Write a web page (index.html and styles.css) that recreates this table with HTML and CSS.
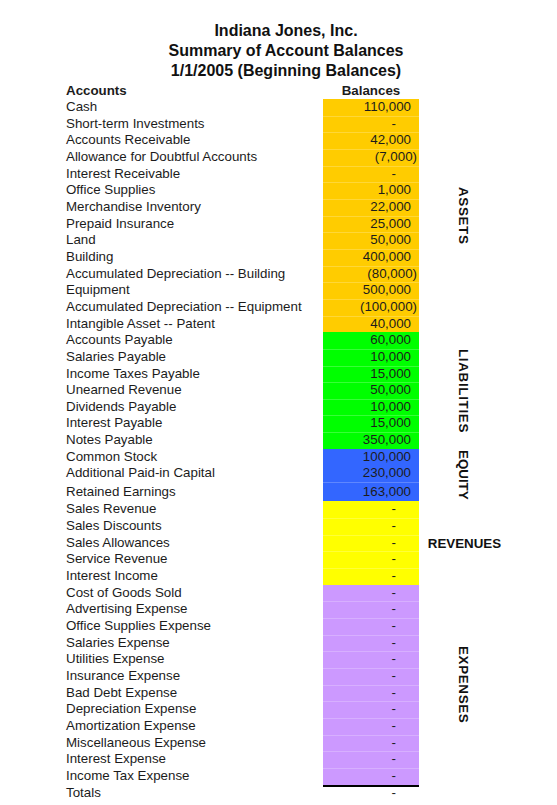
FILE: index.html
```html
<!DOCTYPE html>
<html lang="en">

<head>
    <meta charset="UTF-8">
    <meta name="viewport" content="width=device-width, initial-scale=1.0">
    <title>Summary of Account Balances</title>
    <link rel="stylesheet" href="styles.css">
</head>

<body>
    <div class="sheet">
        <div class="title">
            <div>Indiana Jones, Inc.</div>
            <div>Summary of Account Balances</div>
            <div>1/1/2005 (Beginning Balances)</div>
        </div>

        <div class="row head">
            <span class="name">Accounts</span>
            <span class="amt">Balances</span>
        </div>

        <section class="group assets">
            <div class="rows">
                <div class="row"><span class="name">Cash</span><span class="amt">110,000</span></div>
                <div class="row"><span class="name">Short-term Investments</span><span class="amt nil">-</span></div>
                <div class="row"><span class="name">Accounts Receivable</span><span class="amt">42,000</span></div>
                <div class="row"><span class="name">Allowance for Doubtful Accounts</span><span class="amt neg">(7,000)</span></div>
                <div class="row"><span class="name">Interest Receivable</span><span class="amt nil">-</span></div>
                <div class="row"><span class="name">Office Supplies</span><span class="amt">1,000</span></div>
                <div class="row"><span class="name">Merchandise Inventory</span><span class="amt">22,000</span></div>
                <div class="row"><span class="name">Prepaid Insurance</span><span class="amt">25,000</span></div>
                <div class="row"><span class="name">Land</span><span class="amt">50,000</span></div>
                <div class="row"><span class="name">Building</span><span class="amt">400,000</span></div>
                <div class="row"><span class="name">Accumulated Depreciation -- Building</span><span class="amt neg">(80,000)</span></div>
                <div class="row"><span class="name">Equipment</span><span class="amt">500,000</span></div>
                <div class="row"><span class="name">Accumulated Depreciation -- Equipment</span><span class="amt neg">(100,000)</span></div>
                <div class="row"><span class="name">Intangible Asset -- Patent</span><span class="amt">40,000</span></div>
            </div>
            <div class="side"><span class="vert">ASSETS</span></div>
        </section>

        <section class="group liabilities">
            <div class="rows">
                <div class="row"><span class="name">Accounts Payable</span><span class="amt">60,000</span></div>
                <div class="row"><span class="name">Salaries Payable</span><span class="amt">10,000</span></div>
                <div class="row"><span class="name">Income Taxes Payable</span><span class="amt">15,000</span></div>
                <div class="row"><span class="name">Unearned Revenue</span><span class="amt">50,000</span></div>
                <div class="row"><span class="name">Dividends Payable</span><span class="amt">10,000</span></div>
                <div class="row"><span class="name">Interest Payable</span><span class="amt">15,000</span></div>
                <div class="row"><span class="name">Notes Payable</span><span class="amt">350,000</span></div>
            </div>
            <div class="side"><span class="vert">LIABILITIES</span></div>
        </section>

        <section class="group equity">
            <div class="rows">
                <div class="row"><span class="name">Common Stock</span><span class="amt">100,000</span></div>
                <div class="row"><span class="name">Additional Paid-in Capital</span><span class="amt no-line">230,000</span></div>
                <div class="row tall"><span class="name">Retained Earnings</span><span class="amt">163,000</span></div>
            </div>
            <div class="side"><span class="vert tight">EQUITY</span></div>
        </section>

        <section class="group revenues">
            <div class="rows">
                <div class="row"><span class="name">Sales Revenue</span><span class="amt nil">-</span></div>
                <div class="row"><span class="name">Sales Discounts</span><span class="amt nil">-</span></div>
                <div class="row"><span class="name">Sales Allowances</span><span class="amt nil">-</span></div>
                <div class="row"><span class="name">Service Revenue</span><span class="amt nil">-</span></div>
                <div class="row"><span class="name">Interest Income</span><span class="amt nil">-</span></div>
            </div>
            <div class="side"><span class="flat">REVENUES</span></div>
        </section>

        <section class="group expenses">
            <div class="rows">
                <div class="row"><span class="name">Cost of Goods Sold</span><span class="amt nil">-</span></div>
                <div class="row"><span class="name">Advertising Expense</span><span class="amt nil">-</span></div>
                <div class="row"><span class="name">Office Supplies Expense</span><span class="amt nil">-</span></div>
                <div class="row"><span class="name">Salaries Expense</span><span class="amt nil">-</span></div>
                <div class="row"><span class="name">Utilities Expense</span><span class="amt nil">-</span></div>
                <div class="row"><span class="name">Insurance Expense</span><span class="amt nil">-</span></div>
                <div class="row"><span class="name">Bad Debt Expense</span><span class="amt nil">-</span></div>
                <div class="row"><span class="name">Depreciation Expense</span><span class="amt nil">-</span></div>
                <div class="row"><span class="name">Amortization Expense</span><span class="amt nil">-</span></div>
                <div class="row"><span class="name">Miscellaneous Expense</span><span class="amt nil">-</span></div>
                <div class="row"><span class="name">Interest Expense</span><span class="amt nil">-</span></div>
                <div class="row"><span class="name">Income Tax Expense</span><span class="amt nil">-</span></div>
            </div>
            <div class="side"><span class="vert">EXPENSES</span></div>
        </section>

        <div class="row total">
            <span class="name">Totals</span>
            <span class="amt nil">-</span>
        </div>
    </div>
</body>

</html>
```

FILE: styles.css
```css
* {
    box-sizing: border-box;
    margin: 0;
    padding: 0;
}

body {
    font-family: "Liberation Sans", Arial, sans-serif;
    font-size: 13.33px;
    color: #1c1c1c;
    background-color: white;
}

.sheet {
    width: 506px;
    padding: 21px 0 0 66px;
}

.title {
    font-size: 16px;
    font-weight: bold;
    line-height: 20px;
    text-align: center;
    color: #111;
    margin-bottom: 1px;
}

.row {
    display: flex;
    height: 16.667px;
    line-height: 16.667px;
}

.row.tall {
    height: 19.4px;
    line-height: 19.4px;
}

.name {
    width: 257px;
    white-space: nowrap;
}

.amt {
    width: 96px;
    text-align: right;
    padding-right: 8px;
    white-space: nowrap;
}

.amt.neg {
    padding-right: 2px;
}

.amt.nil {
    padding-right: 23px;
}

/* header row above the list */
.row.head {
    height: 17px;
    line-height: 17px;
    font-weight: bold;
}

.row.head .amt {
    text-align: center;
    padding-right: 0;
}

/* each account type is a coloured block with its tag on the right */
.group {
    display: flex;
}

.group .row + .row .amt {
    box-shadow: inset 0 1px 0 rgba(255, 255, 255, 0.22);
}

.group .row + .row .amt.no-line {
    box-shadow: none;
}

.assets .amt {
    background-color: #ffcc00;
}

.liabilities .amt {
    background-color: #00ff00;
}

.equity .amt {
    background-color: #3366ff;
}

.revenues .amt {
    background-color: #ffff00;
}

.expenses .amt {
    background-color: #cc99ff;
}

.side {
    width: 87px;
    display: flex;
    align-items: center;
    justify-content: center;
    font-weight: bold;
    color: #111;
}

.vert {
    writing-mode: vertical-rl;
    letter-spacing: 0.7px;
    line-height: 16px;
}

.vert.tight {
    letter-spacing: 0;
}

.flat {
    padding-left: 4px;
}

.row.total .amt {
    box-shadow: inset 0 2px 0 #000;
}
```
